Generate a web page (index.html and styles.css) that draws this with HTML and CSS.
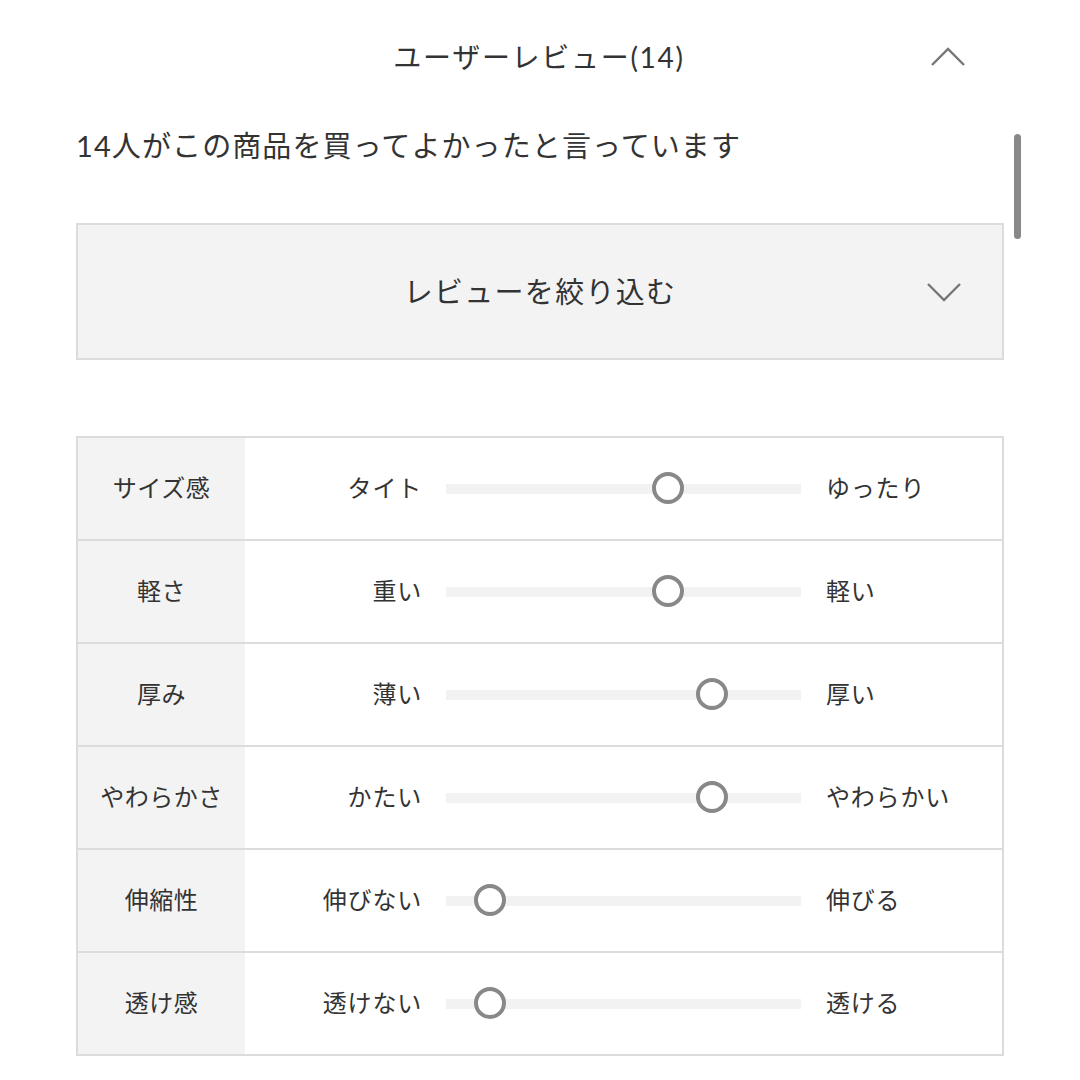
FILE: index.html
```html
<!DOCTYPE html>
<html lang="ja">
<head>
<meta charset="utf-8">
<title>ユーザーレビュー</title>
<link rel="stylesheet" href="styles.css">
</head>
<body>
<div class="page">
  <header class="head">
    <span class="head-spacer"></span>
    <h2 class="title">ユーザーレビュー(14)</h2>
    <svg class="chev chev-up" width="36" height="20" viewBox="0 0 36 20"><polyline points="2,18 18,2 34,18" fill="none" stroke="#777" stroke-width="2.4"/></svg>
  </header>
  <p class="summary">14人がこの商品を買ってよかったと言っています</p>
  <div class="filter">
    <span class="filter-label">レビューを絞り込む</span>
    <svg class="chev chev-down" width="36" height="20" viewBox="0 0 36 20"><polyline points="2,2 18,18 34,2" fill="none" stroke="#777" stroke-width="2.4"/></svg>
  </div>
  <div class="table">
    <div class="row">
      <div class="name">サイズ感</div>
      <div class="scale"><span class="lo">タイト</span><div class="track"><span class="knob" style="left:62.4%"></span></div><span class="hi">ゆったり</span></div>
    </div>
    <div class="row">
      <div class="name">軽さ</div>
      <div class="scale"><span class="lo">重い</span><div class="track"><span class="knob" style="left:62.4%"></span></div><span class="hi">軽い</span></div>
    </div>
    <div class="row">
      <div class="name">厚み</div>
      <div class="scale"><span class="lo">薄い</span><div class="track"><span class="knob" style="left:74.9%"></span></div><span class="hi">厚い</span></div>
    </div>
    <div class="row">
      <div class="name">やわらかさ</div>
      <div class="scale"><span class="lo">かたい</span><div class="track"><span class="knob" style="left:74.9%"></span></div><span class="hi">やわらかい</span></div>
    </div>
    <div class="row">
      <div class="name">伸縮性</div>
      <div class="scale"><span class="lo">伸びない</span><div class="track"><span class="knob" style="left:12.4%"></span></div><span class="hi">伸びる</span></div>
    </div>
    <div class="row">
      <div class="name">透け感</div>
      <div class="scale"><span class="lo">透けない</span><div class="track"><span class="knob" style="left:12.4%"></span></div><span class="hi">透ける</span></div>
    </div>
  </div>
  <div class="scrollbar"></div>
</div>
</body>
</html>
```
FILE: styles.css
```css
* { box-sizing: border-box; }
html, body { margin: 0; padding: 0; background: #fff; }
body {
  font-family: Lato, "Noto Sans CJK JP", sans-serif;
  color: #333;
  width: 1080px;
  height: 1080px;
  overflow: hidden;
}
.page {
  position: relative;
  padding: 0 76px;
}
.head {
  display: grid;
  grid-template-columns: 1fr auto 1fr;
  align-items: center;
  height: 114px;
}
.title {
  margin: 0;
  font-weight: 400;
  font-size: 28px;
  letter-spacing: 1.7px;
  line-height: 1;
  margin-right: 2px;
}
.chev-up {
  justify-self: end;
  margin-right: 38px;
}
.summary {
  margin: 0;
  font-size: 29px;
  letter-spacing: 1.1px;
  line-height: 64px;
}
.filter {
  margin-top: 45px;
  height: 137px;
  background: #f3f3f3;
  border: 2px solid #dcdcdc;
  display: grid;
  grid-template-columns: 1fr auto 1fr;
  align-items: center;
}
.filter-label {
  grid-column: 2;
  font-size: 29px;
  letter-spacing: 1.3px;
  padding-bottom: 3px;
}
.chev-down {
  justify-self: end;
  margin-right: 40px;
}
.table {
  margin-top: 76px;
  border: 2px solid #dcdcdc;
  display: flex;
  flex-direction: column;
}
.row {
  display: grid;
  grid-template-columns: 167px 1fr;
  height: 103px;
  border-top: 2px solid #dcdcdc;
}
.row:first-child { border-top: none; height: 101px; }
.name {
  background: #f3f3f3;
  display: flex;
  align-items: center;
  justify-content: center;
  font-size: 24px;
  letter-spacing: 0.5px;
  padding-bottom: 4px;
}
.scale {
  display: flex;
  align-items: center;
}
.lo, .hi {
  font-size: 24px;
  letter-spacing: 0.8px;
  padding-bottom: 4px;
}
.lo {
  width: 177px;
  text-align: right;
}
.track {
  position: relative;
  margin-left: 24px;
  width: 355px;
  height: 10px;
  background: #f2f2f2;
}
.knob {
  position: absolute;
  top: 50%;
  width: 32px;
  height: 32px;
  margin: -17px 0 0 -16px;
  border: 4px solid #888;
  border-radius: 50%;
  background: #fff;
}
.hi {
  margin-left: 25px;
}
.scrollbar {
  position: absolute;
  left: 1014px;
  top: 134px;
  width: 7px;
  height: 105px;
  border-radius: 4px;
  background: #888;
}
```
